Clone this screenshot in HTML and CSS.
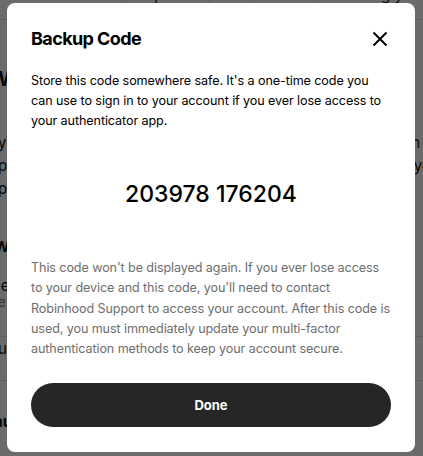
FILE: index.html
```html
<!DOCTYPE html>
<html lang="en">
<head>
<meta charset="utf-8">
<title>Backup Code</title>
<link rel="stylesheet" href="styles.css">
</head>
<body>
<div class="page">
  <div class="page-top">Set up two-factor authentication using your app</div>
  <div class="page-rule"></div>
  <h2 class="page-h">Why use two-factor authentication</h2>
  <p class="page-p">your account is protected by a second step when signing in from a new device, authenticator app and codes</p>
  <p class="page-p">protect your account against unauthorized access, even if your password is exposed somewhere</p>
  <p class="page-p">passcodes are generated by your app</p>
  <h3 class="page-h3">Writing codes</h3>
  <p class="page-p">new codes are required every time</p>
  <p class="page-s">e</p>
  <div class="page-rule r2"></div>
  <p class="page-p">update methods</p>
  <div class="page-rule r3"></div>
  <h3 class="page-h3 last">authentication</h3>
</div>
<div class="overlay">
  <div class="modal" role="dialog" aria-labelledby="mt">
    <div class="modal-head">
      <h1 id="mt" class="modal-title">Backup Code</h1>
      <button class="close" aria-label="Close">
        <svg width="16" height="16" viewBox="0 0 16 16"><path d="M1.5 1.5 L14.5 14.5 M14.5 1.5 L1.5 14.5" stroke="#000" stroke-width="2" fill="none"/></svg>
      </button>
    </div>
    <p class="intro">Store this code somewhere safe. It's a one-time code you can use to sign in to your account if you ever lose access to your authenticator app.</p>
    <div class="code">203978 176204</div>
    <p class="note">This code won't be displayed again. If you ever lose access to your device and this code, you'll need to contact Robinhood Support to access your account. After this code is used, you must immediately update your multi-factor authentication methods to keep your account secure.</p>
    <button class="done">Done</button>
  </div>
</div>
</body>
</html>
```
FILE: styles.css
```css
html, body {
  margin: 0;
  padding: 0;
  width: 423px;
  height: 456px;
  overflow: hidden;
  background: #fff;
  font-family: Inter, "Liberation Sans", sans-serif;
}
.page {
  margin-left: -2px;
  width: 440px;
  color: #111;
  white-space: nowrap;
  overflow: hidden;
}
.page-top {
  font-size: 15px;
  line-height: 16px;
  margin-top: -13px;
  padding-left: 120px;
}
.page-rule {
  height: 1px;
  background: #ddd;
  margin-top: 16px;
}
.page-h {
  font-size: 20px;
  font-weight: 700;
  margin: 47px 0 0;
  line-height: 24px;
}
.page-p {
  font-size: 15px;
  line-height: 23px;
  margin: 0;
}
.page-h + .page-p { margin-top: 40px; }
.page-h3 {
  font-size: 15px;
  font-weight: 700;
  margin: 36px 0 0;
  line-height: 22px;
  margin-left: -4px;
}
.page-h3 + .page-p { margin-top: 16px; margin-left: -6px; }
.page-s { font-size: 13px; color: #777; margin: -4px 0 0; line-height: 18px; }
.r2 { margin-top: 25px; }
.r3 { margin-top: 20px; }
.last { margin-top: 30px; }
.overlay {
  position: fixed;
  inset: 0;
  background: rgba(0, 0, 0, 0.58);
}
.modal {
  box-sizing: border-box;
  margin: 3px 0 0 7px;
  width: 408px;
  height: 449px;
  background: #fff;
  border-radius: 8px;
  padding: 24px 24px 25px;
  display: flex;
  flex-direction: column;
}
.modal-head {
  display: flex;
  align-items: center;
  justify-content: space-between;
  height: 24px;
}
.modal-title {
  margin: 0;
  font-size: 18px;
  font-weight: 700;
  line-height: 24px;
  color: #000;
  letter-spacing: -0.6px;
}
.close {
  border: 0;
  background: none;
  padding: 0;
  width: 16px;
  height: 16px;
  margin-right: 3px;
  display: flex;
}
.intro {
  margin: 20px 0 0;
  font-size: 12.6px;
  letter-spacing: -0.1px;
  line-height: 20px;
  color: #000;
}
.code {
  margin-top: 48px;
  text-align: center;
  font-size: 23px;
  line-height: 30px;
  font-weight: 500;
  color: #000;
}
.note {
  margin: 49px 0 0;
  font-size: 12.6px;
  letter-spacing: -0.1px;
  line-height: 20.3px;
  color: #6e6e6e;
}
.done {
  margin-top: auto;
  height: 44px;
  border: 0;
  border-radius: 22px;
  background: #262626;
  color: #fff;
  font-family: inherit;
  font-size: 13px;
  font-weight: 700;
}
```
